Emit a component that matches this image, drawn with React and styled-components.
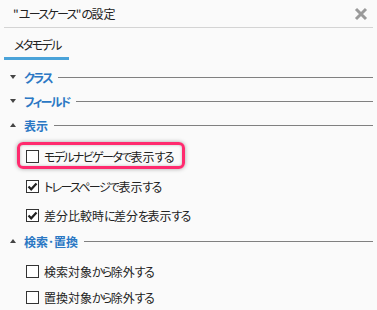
import React from "react";
import styled, { createGlobalStyle } from "styled-components";

const Global = createGlobalStyle`
  html, body { margin: 0; padding: 0; background: #fafafa; }
  body { font-family: "Noto Sans CJK JP", sans-serif; color: #222; font-feature-settings: "palt" 1; }
`;

const Kana = styled.span`
  letter-spacing: -1.65px;
`;

const JText = ({ children }) => {
  const parts = children.split(/([\u3040-\u30ff]+)/);
  return (
    <>
      {parts.map((p, i) =>
        i % 2 === 1 ? <Kana key={i}>{p}</Kana> : p ? <span key={i}>{p}</span> : null
      )}
    </>
  );
};

const Panel = styled.div`
  width: 377px;
  height: 310px;
  background: #fafafa;
  overflow: hidden;
`;

const Header = styled.div`
  height: 28px;
  margin: 0 4px;
  padding: 0 5px 0 9px;
  display: flex;
  align-items: center;
  justify-content: space-between;
  border-bottom: 1px solid #d4d4d4;
  box-sizing: border-box;
`;

const Title = styled.div`
  font-size: 12px;
  color: #222;
  line-height: 1;
`;

const Close = styled.div`
  width: 14px;
  height: 14px;
  display: flex;
  margin-top: 1px;
`;

const TabBar = styled.div`
  display: flex;
  margin: 0 4px;
  height: 32px;
  align-items: flex-end;
`;

const Tab = styled.div`
  width: 65px;
  height: 100%;
  box-sizing: border-box;
  padding-left: 10px;
  font-size: 12px;
  display: flex;
  align-items: center;
  padding-top: 3px;
  border-bottom: 3px solid #4aa3d9;
`;

const Body = styled.div`
  padding: 5px 4px 0 10px;
`;

const SectionHead = styled.div`
  height: 24px;
  display: flex;
  align-items: center;
`;

const Tri = styled.div`
  width: 0;
  height: 0;
  border-left: 3px solid transparent;
  border-right: 3px solid transparent;
  ${(p) =>
    p.$open
      ? "border-bottom: 4px solid #444;"
      : "border-top: 4px solid #444;"}
  margin-right: 8px;
`;

const SectionLabel = styled.div`
  font-size: 12px;
  font-weight: 700;
  color: #2b78c4;
  margin-right: 6px;
  white-space: nowrap;
`;

const Rule = styled.div`
  flex: 1;
  height: 1px;
  background: #808080;
  margin-top: 1px;
`;

const Row = styled.div`
  position: relative;
  height: ${(p) => p.$h}px;
  margin-top: ${(p) => p.$mt || 0}px;
  display: flex;
  align-items: center;
  padding-left: 16px;
  font-size: 12px;
  color: #222;
  ${(p) =>
    p.$highlight &&
    `
    &::after {
      content: "";
      position: absolute;
      left: 7px;
      top: 1px;
      width: 168px;
      height: 27px;
      box-sizing: border-box;
      border: 3px solid #ff2a6e;
      border-radius: 6px;
      box-shadow: 0 0 4px rgba(0,0,0,0.35), inset 0 0 3px rgba(0,0,0,0.25);
    }
  `}
`;

const Box = styled.div`
  width: 13px;
  height: 13px;
  box-sizing: border-box;
  border: 1px solid #333;
  background: #fff;
  margin-right: 5px;
  display: flex;
  align-items: center;
  justify-content: center;
`;

const Check = () => (
  <svg width="11" height="11" viewBox="0 0 11 11">
    <path d="M1.5 5.5 L4.2 8.3 L9.5 2.5" fill="none" stroke="#222" strokeWidth="2.2" />
  </svg>
);

const CheckRow = ({ label, checked, h, mt, highlight }) => (
  <Row $h={h} $mt={mt} $highlight={highlight}>
    <Box>{checked && <Check />}</Box>
    <span>
      <JText>{label}</JText>
    </span>
  </Row>
);

const Section = ({ label, open }) => (
  <SectionHead>
    <Tri $open={open} />
    <SectionLabel>
      <JText>{label}</JText>
    </SectionLabel>
    <Rule />
  </SectionHead>
);

export default function App() {
  return (
    <>
      <Global />
      <Panel>
        <Header>
          <Title>
            <JText>{'"ユースケース"の設定'}</JText>
          </Title>
          <Close>
            <svg width="14" height="14" viewBox="0 0 14 14">
              <path d="M2 2 L12 12 M12 2 L2 12" stroke="#9a9a9a" strokeWidth="3" />
            </svg>
          </Close>
        </Header>
        <TabBar>
          <Tab>
            <JText>メタモデル</JText>
          </Tab>
        </TabBar>
        <Body>
          <Section label="クラス" />
          <Section label="フィールド" />
          <Section label="表示" open />
          <CheckRow h={30} mt={4} highlight label="モデルナビゲータで表示する" />
          <CheckRow h={30} checked label="トレースページで表示する" />
          <CheckRow h={28} checked label="差分比較時に差分を表示する" />
          <Section label="検索･置換" open />
          <CheckRow h={28} mt={4} label="検索対象から除外する" />
          <CheckRow h={24} label="置換対象から除外する" />
        </Body>
      </Panel>
    </>
  );
}
